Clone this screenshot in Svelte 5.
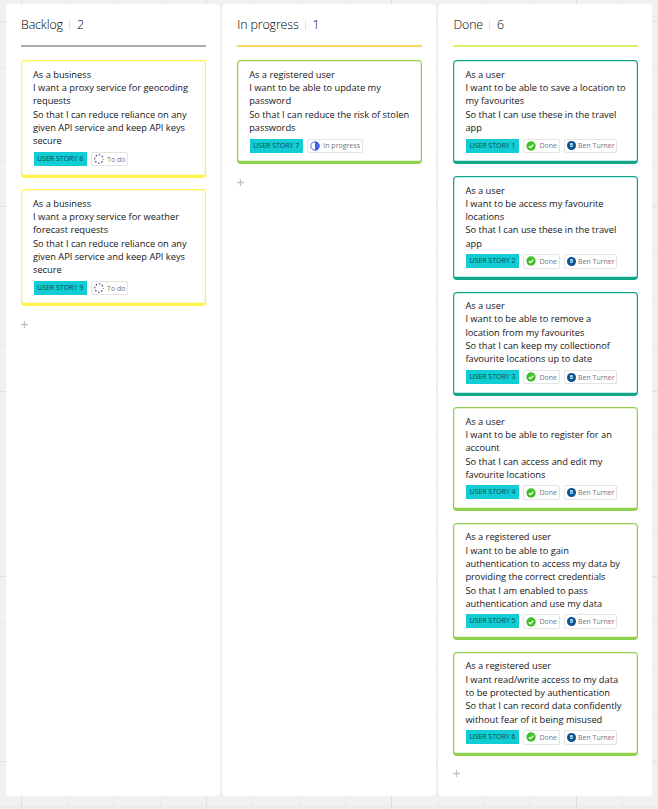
<script>
  const todo = (id, ...lines) => ({ id, lines, status: 'To do', color: 'yellow' });
  const done = (id, color, ...lines) => ({ id, lines, status: 'Done', color, owner: 'Ben Turner' });

  const columns = [
    {
      title: 'Backlog', rule: 'grey', cards: [
        todo(8, 'As a business', 'I want a proxy service for geocoding', 'requests', 'So that I can reduce reliance on any', 'given API service and keep API keys', 'secure'),
        todo(9, 'As a business', 'I want a proxy service for weather', 'forecast requests', 'So that I can reduce reliance on any', 'given API service and keep API keys', 'secure')
      ]
    },
    {
      title: 'In progress', rule: 'amber', cards: [
        { id: 7, color: 'green', status: 'In progress', lines: ['As a registered user', 'I want to be able to update my', 'password', 'So that I can reduce the risk of stolen', 'passwords'] }
      ]
    },
    {
      title: 'Done', rule: 'lime', cards: [
        done(1, 'teal', 'As a user', 'I want to be able to save a location to', 'my favourites', 'So that I can use these in the travel', 'app'),
        done(2, 'teal', 'As a user', 'I want to be access my favourite', 'locations', 'So that I can use these in the travel', 'app'),
        done(3, 'teal', 'As a user', 'I want to be able to remove a', 'location from my favourites', 'So that I can keep my collectionof', 'favourite locations up to date'),
        done(4, 'green', 'As a user', 'I want to be able to register for an', 'account', 'So that I can access and edit my', 'favourite locations'),
        done(5, 'green', 'As a registered user', 'I want to be able to gain', 'authentication to access my data by', 'providing the correct credentials', 'So that I am enabled to pass', 'authentication and use my data'),
        done(6, 'green', 'As a registered user', 'I want read/write access to my data', 'to be protected by authentication', 'So that I can record data confidently', 'without fear of it being misused')
      ]
    }
  ];
</script>

<main class="board">
  {#each columns as column}
    <section class="column">
      <header class={column.rule}>
        <span class="title">{column.title}</span><i class="divider"></i><span>{column.cards.length}</span>
      </header>
      <div class="cards">
        {#each column.cards as card}
          <article class="card {card.color}">
            <div class="story">
              {#each card.lines as line}<div>{line}</div>{/each}
            </div>
            <div class="tags">
              <span class="label">USER STORY {card.id}</span>
              {#if card.status === 'To do'}
                <span class="tag todo">
                  <svg width="10" height="10" viewBox="0 0 10 10"><circle cx="5" cy="5" r="4.2" fill="none" stroke="#3c3c78" stroke-width="1.1" stroke-dasharray="1.5 1.8" stroke-dashoffset="0.75" /></svg>
                  <span class="text">To do</span>
                </span>
              {:else if card.status === 'In progress'}
                <span class="tag progress">
                  <svg width="10" height="10" viewBox="0 0 10 10"><circle cx="5" cy="5" r="4.2" fill="#fff" stroke="#4262e8" stroke-width="1" /><path d="M5 .5a4.5 4.5 0 0 1 0 9z" fill="#4262e8" /></svg>
                  <span class="text">In progress</span>
                </span>
              {:else}
                <span class="tag done">
                  <svg width="10" height="10" viewBox="0 0 10 10"><circle cx="5" cy="5" r="4.7" fill="#43bf2b" /><path d="M2.8 5.2 4.4 6.7 7.3 3.7" fill="none" stroke="#fff" stroke-width="1.3" /></svg>
                  <span class="text">Done</span>
                </span>
              {/if}
              {#if card.owner}
                <span class="tag owner"><span class="avatar">B</span><span class="text">{card.owner}</span></span>
              {/if}
            </div>
          </article>
        {/each}
      </div>
      <svg class="add" width="7" height="7" viewBox="0 0 7 7"><path d="M3.5 0v7M0 3.5h7" stroke="#c4c4c4" stroke-width="1.3" /></svg>
    </section>
  {/each}
</main>

<style>
  :global(body) { margin: 0; }
  .board {
    box-sizing: border-box;
    width: 658px;
    height: 809px;
    overflow: hidden;
    padding: 4px 5px 13px 6px;
    display: flex;
    gap: 2.4px;
    font-family: "Open Sans", sans-serif;
    background-color: #f1f1f1;
    background-image:
      linear-gradient(90deg, #e0e0e0 1px, transparent 1px),
      linear-gradient(#e0e0e0 1px, transparent 1px),
      linear-gradient(90deg, #e8e8e8 1px, transparent 1px),
      linear-gradient(#e8e8e8 1px, transparent 1px);
    background-size: 185px 185px, 185px 185px, 46.25px 46.25px, 46.25px 46.25px;
    background-position: 21px 21px;
  }
  .column {
    box-sizing: border-box;
    flex: none;
    width: 213.8px;
    height: 792px;
    padding: 0 14px 0 15px;
    border-radius: 4px;
    background: #fff;
  }
  header {
    box-sizing: border-box;
    width: 184.8px;
    height: 43px;
    padding-top: 12px;
    display: flex;
    align-items: flex-start;
    border-bottom: 2px solid;
    font-size: 12.4px;
    font-weight: 300;
    line-height: 18px;
    white-space: nowrap;
  }
  header span { color: #000; }
  .title { letter-spacing: -.12px; }
  .divider { width: 1px; height: 10px; margin: 4px 7px 0 6px; background: #e2e2e2; }
  header.grey { border-color: #aaa; }
  header.amber { border-color: #fbd75b; }
  header.lime { border-color: #dced70; }
  .cards { display: flex; flex-direction: column; gap: 11.7px; padding-top: 13.3px; }
  .card {
    box-sizing: border-box;
    width: 184.8px;
    padding: 6.6px 0 8.2px 11px;
    border: 1px solid;
    border-bottom-width: 3px;
    border-radius: 4px;
  }
  .yellow { border-color: #fff04a; box-shadow: inset 0 0 0 .5px #fff04a80; }
  .green { border-color: #90d14f; box-shadow: inset 0 0 0 .5px #90d14f80; }
  .teal { border-color: #12a78a; box-shadow: inset 0 0 0 .5px #12a78a80; }
  .story { font-size: 9.3px; line-height: 13.3px; letter-spacing: -.015px; color: #161616; white-space: nowrap; }
  .tags { display: flex; gap: 4px; margin: 4.2px 0 0 .6px; height: 14.5px; font-size: 7px; line-height: 13px; white-space: nowrap; }
  .label {
    box-sizing: border-box;
    width: 53px;
    height: 14px;
    background: #12cdd4;
    color: #054a52;
    text-align: center;
  }
  .tag {
    box-sizing: border-box;
    height: 14.5px;
    display: flex;
    align-items: center;
    border: 1px solid #e4e4e4;
    border-radius: 2px;
    color: #777;
  }
  .tag svg { margin: 0 3px 0 2.5px; flex: none; }
  .todo { width: 37.5px; }
  .progress { width: 56px; }
  .done { width: 37px; }
  .owner { width: 53.5px; }
  .avatar {
    width: 9px;
    height: 9px;
    margin: 0 2px 0 2px;
    border-radius: 50%;
    background: #0b5294;
    color: #dce9f5;
    font-size: 5px;
    line-height: 9px;
    font-weight: 700;
    text-align: center;
  }
  .add { display: block; margin-top: 14.5px; }
</style>
